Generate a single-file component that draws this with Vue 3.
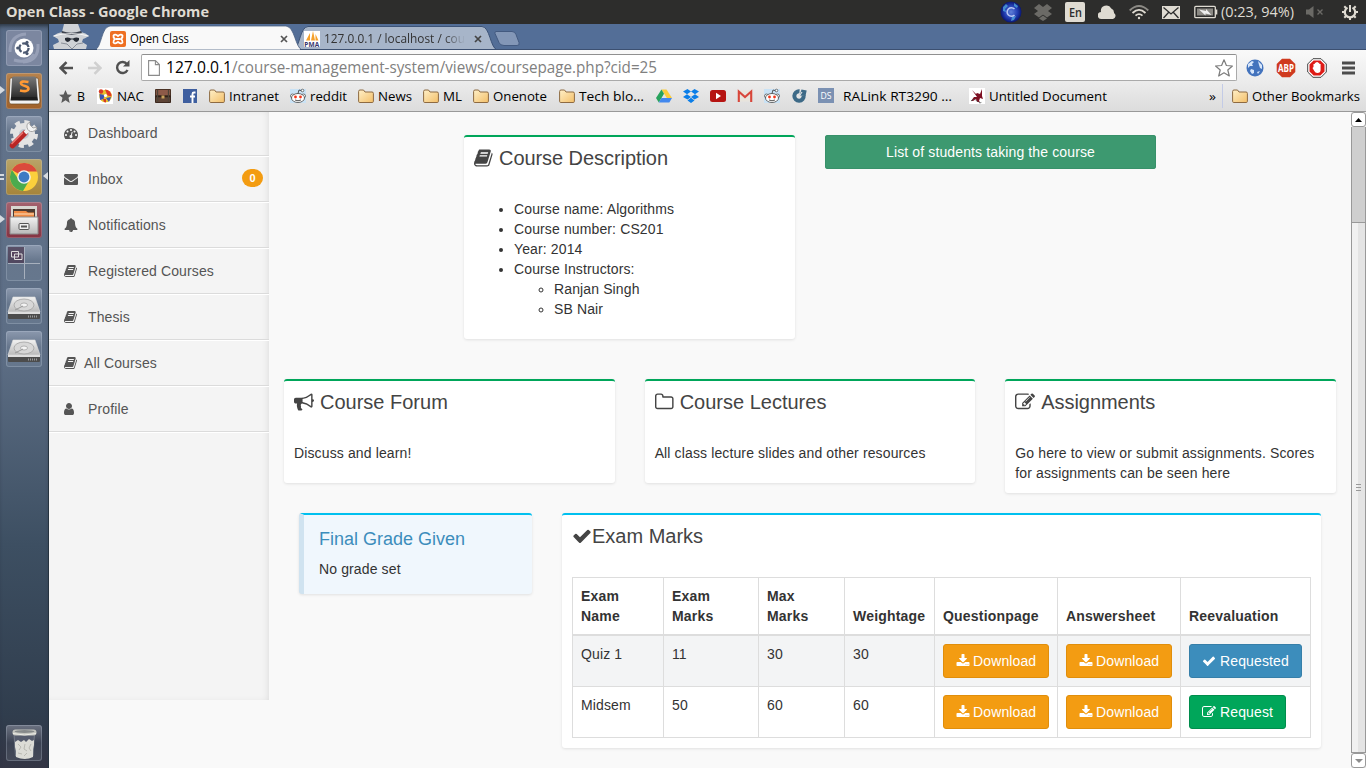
<script setup>
import { h } from 'vue'

// One line of text set to an exact width
const Fit = (props) =>
  h('svg', { width: props.w, height: props.ht || 18, class: 'fit' }, [
    h('text', { x: 0, y: props.base || 13.5, textLength: props.w, lengthAdjust: 'spacingAndGlyphs', fill: 'currentColor' }, props.t),
  ])
Fit.props = ['t', 'w', 'ht', 'base']

const paths = {
  dash: 'M384 1152q0-53-37.5-90.5t-90.5-37.5-90.5 37.5-37.5 90.5 37.5 90.5 90.5 37.5 90.5-37.5 37.5-90.5zm192-448q0-53-37.5-90.5t-90.5-37.5-90.5 37.5-37.5 90.5 37.5 90.5 90.5 37.5 90.5-37.5 37.5-90.5zm428 481l101-382q6-26-7.5-48.5t-38.5-29.5-48 6.5-30 39.5l-101 382q-60 5-107 43.5t-63 98.5q-20 77 20 146t117 89 146-20 89-117q16-60-6-117t-72-91zm660-33q0-53-37.5-90.5t-90.5-37.5-90.5 37.5-37.5 90.5 37.5 90.5 90.5 37.5 90.5-37.5 37.5-90.5zm-640-640q0-53-37.5-90.5t-90.5-37.5-90.5 37.5-37.5 90.5 37.5 90.5 90.5 37.5 90.5-37.5 37.5-90.5zm448 192q0-53-37.5-90.5t-90.5-37.5-90.5 37.5-37.5 90.5 37.5 90.5 90.5 37.5 90.5-37.5 37.5-90.5zm320 448q0 261-141 483-19 29-54 29h-1402q-35 0-54-29-141-221-141-483 0-182 71-348t191-286 286-191 348-71 348 71 286 191 191 286 71 348z',
  mail: 'M1792 710v794q0 66-47 113t-113 47h-1472q-66 0-113-47t-47-113v-794q44 49 101 87 362 246 497 345 57 42 92.5 65.5t94.5 48 110 24.5h2q51 0 110-24.5t94.5-48 92.5-65.5q170-123 498-345 57-39 100-87zm0-294q0 79-49 151t-122 123q-376 261-468 325-10 7-42.5 30.5t-54 38-52 32.5-57.5 27-50 9h-2q-23 0-50-9t-57.5-27-52-32.5-54-38-42.5-30.5q-91-64-262-182.5t-205-142.5q-62-42-117-115.5t-55-136.5q0-78 41.5-130t118.5-52h1472q65 0 112.5 47t47.5 113z',
  bell: 'M912 1696q0-16-16-16-59 0-101.5-42.5t-42.5-101.5q0-16-16-16t-16 16q0 73 51.5 124.5t124.5 51.5q16 0 16-16zm816-288q0 52-38 90t-90 38h-448q0 106-75 181t-181 75-181-75-75-181h-448q-52 0-90-38t-38-90q50-42 91-88t85-119.5 74.5-158.5 50-206 19.5-260q0-152 117-282.5t307-158.5q-8-19-8-39 0-40 28-68t68-28 68 28 28 68q0 20-8 39 190 28 307 158.5t117 282.5q0 139 19.5 260t50 206 74.5 158.5 85 119.5 91 88z',
  book: 'M1639 478q40 57 18 129l-275 906q-19 64-76.5 107.5t-122.5 43.5h-923q-77 0-148.5-53.5t-99.5-131.5q-24-67-2-127 0-4 3-27t4-37q1-8-3-21.5t-3-19.5q2-11 8-21t16.5-23.5 16.5-23.5q23-38 45-91.5t30-91.5q3-10 .5-30t-.5-28q3-11 17-28t17-23q21-36 42-92t25-90q1-9-2.5-32t.5-28q4-13 22-30.5t22-22.5q19-26 42.5-84.5t27.5-96.5q1-8-3-25.5t-2-26.5q2-8 9-18t18-23 17-21q8-12 16.5-30.5t15-35 16-36 19.5-32 26.5-23.5 36-11.5 47.5 5.5l-1 3q38-9 51-9h761q74 0 114 56t18 130l-274 906q-36 119-71.5 153.5t-128.5 34.5h-869q-27 0-38 15-11 16-1 43 24 70 144 70h923q29 0 56-15.5t35-41.5l300-987q7-22 5-57 38 15 59 43zm-1064 2q-4 13 2 22.5t20 9.5h608q13 0 25.5-9.5t16.5-22.5l21-64q4-13-2-22.5t-20-9.5h-608q-13 0-25.5 9.5t-16.5 22.5zm-83 256q-4 13 2 22.5t20 9.5h608q13 0 25.5-9.5t16.5-22.5l21-64q4-13-2-22.5t-20-9.5h-608q-13 0-25.5 9.5t-16.5 22.5z',
  user: 'M1280 1399q0 109-62.5 187t-150.5 78h-854q-88 0-150.5-78t-62.5-187q0-85 8.5-160.5t31.5-152 58.5-131 94-89 134.5-34.5q131 128 313 128t313-128q76 0 134.500 34.500t94 89 58.500 131 31.500 152 8.500 160.500zm-256-887q0 159-112.500 271.500t-271.500 112.500-271.500-112.500-112.500-271.500 112.500-271.500 271.500-112.500 271.500 112.500 112.500 271.500z',
  horn: 'M1664 640q53 0 90.5 37.5t37.5 90.5-37.5 90.5-90.5 37.5v384q0 52-38 90t-90 38q-417-347-812-380-58 19-91 66t-31 100.5 40 92.5q-20 33-23 65.5t6 58 33.5 55 48 50 61.5 50.5q-29 58-111.5 83t-168.5 11.5-132-55.5q-7-23-29.5-87.5t-32-94.5-23-89-15-101 3.5-98.5 22-110.5h-122q-66 0-113-47t-47-113v-192q0-66 47-113t113-47h480q435 0 896-384 52 0 90 38t38 90v384zm-128 604v-954q-394 302-768 343v270q377 42 768 341z',
  folder: 'M1536 1312v-704q0-40-28-68t-68-28h-704q-40 0-68-28t-28-68v-64q0-40-28-68t-68-28h-320q-40 0-68 28t-28 68v960q0 40 28 68t68 28h1216q40 0 68-28t28-68zm128-704v704q0 92-66 158t-158 66h-1216q-92 0-158-66t-66-158v-960q0-92 66-158t158-66h320q92 0 158 66t66 158v32h672q92 0 158 66t66 158z',
  edit: 'M888 1184l116-116-152-152-116 116v56h96v96h56zm440-720q-16-16-33 1l-350 350q-17 17-1 33t33-1l350-350q17-17 1-33zm80 594v190q0 119-84.5 203.5t-203.5 84.5h-832q-119 0-203.5-84.5t-84.5-203.5v-832q0-119 84.5-203.5t203.5-84.5h832q63 0 117 25 15 7 18 23 3 17-9 29l-49 49q-14 14-32 8-23-6-45-6h-832q-66 0-113 47t-47 113v832q0 66 47 113t113 47h832q66 0 113-47t47-113v-126q0-13 9-22l64-64q15-15 35-7t20 29zm-96-738l288 288-672 672h-288v-288zm444 132l-92 92-288-288 92-92q28-28 68-28t68 28l152 152q28 28 28 68t-28 68z',
  check: 'M1671 566q0 40-28 68l-724 724-136 136q-28 28-68 28t-68-28l-136-136-362-362q-28-28-28-68t28-68l136-136q28-28 68-28t68 28l294 295 656-657q28-28 68-28t68 28l136 136q28 28 28 68z',
  down: 'M1344 1344q0-26-19-45t-45-19-45 19-19 45 19 45 45 19 45-19 19-45zm256 0q0-26-19-45t-45-19-45 19-19 45 19 45 45 19 45-19 19-45zm128-224v320q0 40-28 68t-68 28h-1472q-40 0-68-28t-28-68v-320q0-40 28-68t68-28h465l135 136q58 56 136 56t136-56l136-136h464q40 0 68 28t28 68zm-325-569q17 41-14 70l-448 448q-18 19-45 19t-45-19l-448-448q-31-29-14-70 17-39 59-39h256v-448q0-26 19-45t45-19h256q26 0 45 19t19 45v448h256q42 0 59 39z',
}
const Fa = (props) =>
  h('svg', { viewBox: '0 0 1792 1792', width: props.s || 14, height: props.s || 14, class: 'fa' }, [
    h('path', { d: paths[props.n], fill: 'currentColor' }),
  ])
Fa.props = ['n', 's']

const menu = [
  { i: 'dash', t: 'Dashboard' },
  { i: 'mail', t: 'Inbox', badge: '0' },
  { i: 'bell', t: 'Notifications' },
  { i: 'book', t: 'Registered Courses' },
  { i: 'book', t: 'Thesis' },
  { i: 'book', t: 'All Courses', tight: true },
  { i: 'user', t: 'Profile' },
]

// slot: full width of the entry; tw: width of its label
const marks = [
  { k: 'star', t: 'B', slot: 38, tw: 8, iw: 18 },
  { k: 'nac', t: 'NAC', slot: 58, tw: 27, iw: 20 },
  { k: 'chest', slot: 27 },
  { k: 'fb', slot: 27 },
  { k: 'folder', t: 'Intranet', slot: 81, tw: 50, iw: 20 },
  { k: 'reddit', t: 'reddit', slot: 68, tw: 37, iw: 20 },
  { k: 'folder', t: 'News', slot: 65, tw: 34, iw: 20 },
  { k: 'folder', t: 'ML', slot: 50, tw: 19, iw: 20 },
  { k: 'folder', t: 'Onenote', slot: 86, tw: 54, iw: 20 },
  { k: 'folder', t: 'Tech blo…', slot: 97, tw: 65, iw: 20 },
  { k: 'drive', slot: 27 },
  { k: 'dropbox', slot: 27 },
  { k: 'tube', slot: 27 },
  { k: 'gmail', slot: 27 },
  { k: 'reddit', slot: 27 },
  { k: 'cc', slot: 27 },
  { k: 'ds', t: 'RALink RT3290 …', slot: 151, tw: 109, iw: 25 },
  { k: 'doc', t: 'Untitled Document', slot: 240, tw: 118, iw: 20 },
]

const exams = [
  { n: 'Quiz 1', m: 11, x: 30, w: 30, done: true },
  { n: 'Midsem', m: 50, x: 60, w: 60, done: false },
]
const launchers = ['ubuntu', 'sublime', 'settings', 'chrome', 'files', 'workspaces', 'disk', 'disk']
</script>

<template>
  <div class="desktop">
    <svg class="defs" width="0" height="0">
      <defs>
        <linearGradient id="gFold" x1="0" y1="0" x2="1" y2="1"><stop offset="0" stop-color="#fff0c8" /><stop offset="1" stop-color="#f3bf69" /></linearGradient>
        <linearGradient id="gDisk" x1="0" y1="0" x2="0" y2="1"><stop offset="0" stop-color="#f2f2f2" /><stop offset="1" stop-color="#b9b9b9" /></linearGradient>
        <linearGradient id="gKey" x1="0" y1="0" x2="0" y2="1"><stop offset="0" stop-color="#7a7a7a" /><stop offset="1" stop-color="#2e2e2e" /></linearGradient>
        <radialGradient id="gGlobe"><stop offset="0" stop-color="#5f7fd8" /><stop offset=".6" stop-color="#2440b4" /><stop offset="1" stop-color="#0a1670" /></radialGradient>
      </defs>
    </svg>

    <header class="panel">
      <Fit class="title" t="Open Class - Google Chrome" :w="203" :ht="22" :base="16" />
      <div class="tray">
        <svg width="22" height="24" viewBox="0 0 22 24"><circle cx="11" cy="12" r="10.500" fill="url(#gGlobe)" /><path d="M3 7l3-3 2 2-3 3 1 3-3-1zM14 3l4 3-1 2-3-2zM12 17l4-1-2 4-3 1z" fill="#56b4e4" opacity=".7" /><path d="M14.500 9a4.300 4.300 0 1 0 0 6" fill="none" stroke="#b9c8f4" stroke-width="1.500" /></svg>
        <svg class="m12" width="18" height="18" viewBox="0 0 18 18" fill="#6b6a66"><path d="M5 1l4 3-5 4-4-3zM13 1l5 4-4 3-5-4zM4 8l5 3.500-4 3-5-3.500zM14 8l4 3-5 3.500-4-3zM9 12.500l4 3-4 2.500-4-2.500zM9 4l5 4-5 4-5-4z" /></svg>
        <span class="en m13"><Fit t="En" :w="13" :ht="18" :base="14" /></span>
        <svg class="m13" width="18" height="16" viewBox="0 0 18 16"><path d="M3.500 15A3.500 3.500 0 0 1 3 8 5.500 5.500 0 0 1 13.300 4.500 4.500 4.500 0 0 1 16 9a3.300 3.300 0 0 1-1 6z" fill="#dfdbd2" /></svg>
        <svg class="m13" width="20" height="16" viewBox="0 0 20 16" fill="none" stroke="#dfdbd2" stroke-width="1.800"><path d="M.7 6.500Q10-2.500 19.300 6.500" stroke="#8c8a85" /><path d="M3.500 9Q10 2.800 16.500 9" /><path d="M6.500 11.700Q10 8.500 13.500 11.700" /><circle cx="10" cy="14" r="1.200" fill="#dfdbd2" stroke="none" /></svg>
        <svg class="m13" width="18" height="13" viewBox="0 0 18 13"><path d="M0 0h18v13H0z" fill="#dfdbd2" /><path d="M1.500 1.500L9 8l7.500-6.500M1.500 12L6.500 6.500M16.500 12L11.500 6.500" fill="none" stroke="#2c2c2c" stroke-width="1.300" /></svg>
        <svg class="m14" width="24" height="14" viewBox="0 0 24 14"><rect x=".8" y="1.300" width="20.500" height="11.400" rx="1" fill="none" stroke="#dfdbd2" stroke-width="1.300" /><path d="M22.500 4.500v5" stroke="#dfdbd2" stroke-width="1.600" /><path d="M3 3.500h16v7H3z" fill="#8b8984" /><path d="M5 4.500l7 1.500V4l5.500 6-6-1.500v2z" fill="#eee" /></svg>
        <Fit class="m4" t="(0:23, 94%)" :w="73" :ht="22" :base="16" />
        <svg class="m12" width="18" height="14" viewBox="0 0 18 14"><path d="M0 4.500h3L7.500 1v12L3 9.500H0z" fill="#6b6a66" /><path d="M11.500 4.500l5 5m0-5l-5 5" stroke="#6b6a66" stroke-width="1.400" /></svg>
        <svg class="m17" width="18" height="18" viewBox="0 0 18 18" fill="none" stroke="#dfdbd2"><path d="M6.500 4.600A5.200 5.200 0 1 0 11.500 4.600" stroke-width="2.200" /><path d="M9 2v7" stroke-width="2" /><path d="M1 9h2.500M14.500 9H17M3.300 14.700L5 13M13 13l1.700 1.700M3.300 3.300L5 5M13 5l1.700-1.700M9 14.500V17" stroke-width="2" /></svg>
      </div>
    </header>

    <div class="work">
      <nav class="launcher">
        <div v-for="(l, i) in launchers" :key="i" class="tile" :class="l">
          <svg viewBox="0 0 36 36" width="36" height="36">
            <g v-if="l === 'ubuntu'"><path d="M4 22Q4 5 20 4M32 14Q33 31 17 32M8 30Q22 34 28 24" fill="none" stroke="#b7bfd3" stroke-width="3" opacity=".45" /><circle cx="18" cy="18" r="9.500" fill="#fff" /><circle cx="18" cy="18" r="4.600" fill="none" stroke="#4b5870" stroke-width="2.300" stroke-dasharray="8 1.630" /><circle cx="11.700" cy="18" r="1.600" fill="#4b5870" /><circle cx="21" cy="12.400" r="1.600" fill="#4b5870" /><circle cx="21" cy="23.600" r="1.600" fill="#4b5870" /></g>
            <g v-else-if="l === 'sublime'"><path d="M5 5h26q1 0 1.200 1L34 28q0 3-2 3H5q-2 0-2-3L4 6q0-1 1-1z" fill="#f2f2f2" stroke="#6b4a22" stroke-width=".7" /><path d="M7.500 3.500h21q1.500 0 1.700 1.500l1.300 19H5L6 5q0-1.500 1.500-1.500z" fill="url(#gKey)" /><path d="M5 24h26.500l.5 3.500H4.500z" fill="#1e1e1e" /><path d="M22.500 9Q14.500 7.500 15 10.500q.5 1.700 4 2.500t3.500 3q-.5 3.300-8.500 1.500" fill="none" stroke="#ff9934" stroke-width="2.600" /></g>
            <g v-else-if="l === 'settings'"><circle cx="18" cy="18" r="11" fill="#e3e3e3" /><circle cx="18" cy="18" r="12" fill="none" stroke="#e3e3e3" stroke-width="4" stroke-dasharray="5 4.420" /><circle cx="18" cy="18" r="5" fill="#c1c7d0" /><path d="M6.500 29.500L19 17" stroke="#b92525" stroke-width="5.500" stroke-linecap="round" /><path d="M5.500 28L17 16.500" stroke="#ec7770" stroke-width="1.500" /><path d="M19 17l6-6" stroke="#eee" stroke-width="4" /><path d="M24 6a5 5 0 1 0 7 5l-4 1-3-3z" fill="#f3f3f3" stroke="#888" stroke-width=".7" /></g>
            <g v-else-if="l === 'chrome'"><circle cx="18" cy="18" r="14" fill="#fbd03c" /><path d="M18 18L5.900 11A14 14 0 0 1 31 12.500H18z" fill="#da4a3c" /><path d="M5.900 11A14 14 0 0 0 17 32l6.500-11H13z" fill="#4aab4e" /><circle cx="18" cy="18" r="6.800" fill="#f4f4f4" /><circle cx="18" cy="18" r="5.400" fill="#3d7bc4" /></g>
            <g v-else-if="l === 'files'"><path d="M5 4h26v12H5z" fill="#d9d6d0" /><path d="M7 7h22v8H7z" fill="#4d3b32" /><path d="M8 9h12l2 1.500h6V15H8z" fill="#f08b45" /><path d="M8 12h20" stroke="#fbe0c0" /><path d="M4 15h28v17H4z" fill="url(#gDisk)" stroke="#8b8b8b" /><rect x="13" y="21.500" width="10" height="6" rx="1" fill="#eee" stroke="#555" /><path d="M15 24.500h6" stroke="#555" stroke-width="2" /></g>
            <g v-else-if="l === 'workspaces'"><path d="M2 2h16v16H2z" fill="#4b3a52" opacity=".75" /><path d="M18.500 2v32M2 18.500h32" stroke="#a7b0bd" /><path d="M5.500 6.500h7v5.500h-7zM8.500 9h7.500v5.500H8.500z" fill="#57455e" stroke="#ddd" /></g>
            <g v-else><path d="M7 9h22l5 15H2z" fill="url(#gDisk)" stroke="#ddd" stroke-width=".6" /><ellipse cx="18" cy="17" rx="10" ry="6" fill="#d7d7d7" stroke="#a2a2a2" stroke-width=".8" /><ellipse cx="18" cy="17" rx="3.500" ry="2" fill="#f4f4f4" stroke="#999" stroke-width=".7" /><path d="M9 22l8-4" stroke="#999" /><path d="M2 24h32v6q0 1-1 1H3q-1 0-1-1z" fill="#4c4c4c" /><path d="M2 24h32v2H2z" fill="#dedede" /><path d="M22 28.500h9" stroke="#999" stroke-dasharray="1 1" stroke-width="2" /></g>
          </svg>
          <i v-if="l === 'sublime' || l === 'files'" class="run"></i>
          <i v-if="l === 'chrome'" class="bars"></i>
          <i v-if="l === 'chrome'" class="focus"></i>
        </div>
        <div class="tile trash">
          <svg viewBox="0 0 36 36" width="36" height="36">
            <path d="M8 9l1.500 22q8.500 3.500 17.500 0L28.500 9z" fill="#565c6d" stroke="#8d939c" stroke-width=".6" />
            <path d="M9 17l3-2 3 2 3-2 2 2 3-3 3 2 2-1 0 5-1 4 0 8q-8 4-17 0l0-6-1-4z" fill="#dcdcd6" />
            <path d="M12 19l3 3-2 3m6-6l-1 5 3 2m4-7l-2 4 2 3m-13 2l4 1m5-1l-3 3" fill="none" stroke="#b4b4ae" stroke-width=".9" />
            <rect x="6.500" y="4.500" width="24" height="6" rx="3" fill="#c4c5bf" /><ellipse cx="18.500" cy="6.500" rx="10" ry="1.500" fill="#85898a" /><path d="M7 8.500q11.500 3 23 0" stroke="#ecece6" fill="none" />
          </svg>
        </div>
      </nav>

      <div class="browser">
        <div class="tabstrip">
          <svg class="shapes" width="1317" height="26" viewBox="49 24 1317 26">
            <path d="M294 50C300 46 300 27 308 26.500H482C490 27 490 47 497 50z" fill="#a7b5c9" stroke="#3c5377" />
            <path d="M496 31.500h16q3 0 4 3l3 8q1 3-2 3h-13q-4 0-5-3l-4-9q-.500-2 1-2z" fill="#8397b7" stroke="#435a80" />
            <path d="M95 50C102 47 101 27 110 26H286C295 27 295 47 302 50z" fill="#f9f9f9" stroke="#4a5f82" stroke-width=".8" />
            <path d="M49 49.500h48M300 49.500h1066" stroke="#3c5071" />
            <path d="M64 24h14l3 8q5 1 8 4-5 3-6 3l-1 3 5 3-1 4H54l-1-4 6-3-1-3-5-3q4-3 9-4z" fill="#cfd2d6" />
            <path d="M62 31q9 3.500 19 0l1 2q-10 3.500-20.500 0z" fill="#3d434e" /><path d="M53.500 36q18-5 35 0" stroke="#fff" fill="none" stroke-width=".8" />
            <path d="M65 38q3-1 6 .5h2q3-1.500 6-.5v2q-3 4-6-.5h-2q-3 4.500-6 .5z" fill="#252a33" /><path d="M61 43l6 1 5 5 5-5 6-1" stroke="#8b9099" fill="none" />
          </svg>
          <div class="tab first">
            <svg width="16" height="16" viewBox="0 0 16 16"><rect width="16" height="16" rx="2" fill="#ee6f22" /><path d="M3.500 4.500q1.500-2 4.500.5 3-2.500 4.500-.5.5 2-1.500 3.500 2 1.500 1.500 3.500-1.500 2-4.500-.5-3 2.500-4.500.5-.5-2 1.500-3.500-2-1.500-1.500-3.500zM6 8h4" fill="none" stroke="#fff" stroke-width="1.800" /></svg>
            <Fit t="Open Class" :w="59" :base="12.500" />
            <svg class="x" width="8" height="8" viewBox="0 0 8 8"><path d="M1 1l6 6m0-6L1 7" stroke="#555" stroke-width="1.700" /></svg>
          </div>
          <div class="tab second">
            <svg width="16" height="16" viewBox="0 0 16 16"><path d="M0 0h16v16H0z" fill="#fff" /><path d="M2 9.500L6 2v7.500zM7 9.500L9 0l2 9.500zM11.500 3l3 6.500h-3z" fill="#f5a02a" /><text x=".3" y="15.500" font-size="6.500" font-weight="700" textLength="15" fill="#36366b">PMA</text></svg>
            <Fit class="fade" t="127.0.0.1 / localhost / cou" :w="141" :base="12.500" />
            <svg class="x" width="8" height="8" viewBox="0 0 8 8"><path d="M1 1l6 6m0-6L1 7" stroke="#444" stroke-width="1.700" /></svg>
          </div>
        </div>

        <div class="toolbar">
          <svg width="15" height="14" viewBox="0 0 15 14"><path d="M14 7H2M7.500 1.200L1.700 7l5.800 5.800" fill="none" stroke="#505050" stroke-width="2.600" /></svg>
          <svg class="fwd" width="15" height="14" viewBox="0 0 15 14"><path d="M1 7h12M7.500 1.200L13.300 7l-5.800 5.800" fill="none" stroke="#d0d0d0" stroke-width="2.600" /></svg>
          <svg class="reload" width="15" height="15" viewBox="0 0 15 15"><path d="M12 4.200A5.500 5.500 0 1 0 12.500 10" fill="none" stroke="#505050" stroke-width="2.400" /><path d="M14.500 0v6.500H8z" fill="#505050" /></svg>
          <div class="url">
            <svg width="12" height="16" viewBox="0 0 12 16"><path d="M.6.600h6.800l4 4v10.800H.6zM7.400.6v4h4" fill="#fff" stroke="#8b8b8b" stroke-width="1.100" /></svg>
            <Fit class="host" t="127.0.0.1" :w="66" :ht="24" :base="17" />
            <Fit class="path" t="/course-management-system/views/coursepage.php?cid=25" :w="425" :ht="24" :base="17" />
            <svg class="fav" width="18" height="18" viewBox="0 0 18 18"><path d="M9 .8l2.400 5.700 6 .5-4.600 4 1.500 6L9 13.800 3.700 17l1.500-6L.6 7l6-.5z" fill="#fff" stroke="#7c7c7c" stroke-width="1.200" stroke-linejoin="round" /></svg>
          </div>
          <svg class="e1" width="18" height="18" viewBox="0 0 18 18"><circle cx="9" cy="9" r="8.500" fill="#4373bd" /><path d="M2 5l4-3 2 1-2 2 1 2-3 0-2 2zM12 2l4 4 0 4-2-1-1-3zM5 10l3 1 0 3-2 1-2-3zM11 13l3-1-2 3z" fill="#d7e6fa" /></svg>
          <svg class="e2" width="20" height="20" viewBox="0 0 20 20"><path d="M6 .7h8L19.300 6v8L14 19.300H6L.7 14V6z" fill="#cf3a1f" /><text x="2" y="14" textLength="16" lengthAdjust="spacingAndGlyphs" font-size="11" font-weight="700" fill="#fff">ABP</text></svg>
          <svg class="e3" width="20" height="20" viewBox="0 0 20 20"><path d="M6 .7h8L19.300 6v8L14 19.300H6L.7 14V6z" fill="#fff" stroke="#444" /><path d="M6.600 2.500h6.800l4.100 4.100v6.800l-4.100 4.100H6.600l-4.100-4.100V6.600z" fill="#de1b16" /><path d="M6.500 9V6h1.300V4.700h1.500V4h1.500v.8h1.500V6h1.300v6q0 3-3.300 3-2 0-3-2L5.500 10z" fill="#fff" /></svg>
          <svg class="e4" width="14" height="14" viewBox="0 0 14 14"><path d="M0 2h13M0 7h13M0 12h13" stroke="#4c4c4c" stroke-width="2.800" /></svg>
        </div>

        <div class="bookmarks">
          <div v-for="(b, i) in marks" :key="i" class="bm" :style="{ width: b.slot + 'px' }">
            <span class="bi" :style="{ width: (b.iw || 16) + 'px' }">
              <svg v-if="b.k === 'star'" width="13" height="13" viewBox="0 0 13 13"><path d="M6.500 0l2 4.500 4.500.3-3.500 3L10.700 13 6.500 10.200 2.300 13l1.200-5.200L0 4.800l4.500-.3z" fill="#5a5a5a" /></svg>
              <svg v-else width="16" height="16" viewBox="0 0 16 16">
                <g v-if="b.k === 'folder'"><path d="M.6 13.400V3.500Q.6 2 2 2h3.500l1.500 2h7q1.400 0 1.400 1.400v8q0 1.100-1.200 1.100H1.800Q.6 14.500.6 13.400z" fill="url(#gFold)" stroke="#8d6a42" /></g>
                <g v-else-if="b.k === 'nac'"><path d="M0 0h16v16H0z" fill="#fff" /><circle cx="8.500" cy="8" r="6.300" fill="#e7c22d" /><path d="M8 1.500a6.500 6.500 0 0 1 6.500 7l-4-1z" fill="#e03a27" /><path d="M2.500 6l5 1-1 4-3.500 1z" fill="#3d55b1" /><path d="M9 10l5-1-2 5z" fill="#3d55b1" /><circle cx="4" cy="3.500" r="2.200" fill="#d73a27" /><path d="M6 11l3 0 0 3.500-2-.5z" fill="#d73a27" /><circle cx="8.500" cy="7.500" r="1.600" fill="#fff" /></g>
                <g v-else-if="b.k === 'chest'"><path d="M.5 1.500h15V8H.5z" fill="#8d5a48" stroke="#4a3225" /><path d="M.5 8h15v6.500H.5z" fill="#5e4436" stroke="#3c281e" /><path d="M.5 8.500h15" stroke="#2f221a" stroke-width="1.500" /><path d="M2.500 2v12M13.500 2v12" stroke="#4e4438" stroke-width="1.300" /><path d="M6.500 7.500h3v3h-3z" fill="#c9a25b" /></g>
                <g v-else-if="b.k === 'fb'"><path d="M1 1h14v14H1z" fill="#3f5f9f" /><path d="M13.500 4.500H12Q10.500 4.500 10.500 6v9M8 8.500h5" stroke="#fff" stroke-width="1.900" fill="none" /></g>
                <g v-else-if="b.k === 'reddit'"><path d="M0 1h16v14H0z" fill="#c9e2f5" /><circle cx="2.500" cy="8" r="2" fill="#fff" stroke="#555" stroke-width=".8" /><circle cx="13.500" cy="8" r="2" fill="#fff" stroke="#555" stroke-width=".8" /><ellipse cx="8" cy="10" rx="6.500" ry="4.500" fill="#fff" stroke="#444" stroke-width=".8" /><circle cx="5.500" cy="9" r="1.400" fill="#f4381b" /><circle cx="10.500" cy="9" r="1.400" fill="#f4381b" /><path d="M5 12q3 1.500 6 0M8 5.500L9 2l3 .8" stroke="#444" fill="none" stroke-width=".9" /><circle cx="12.500" cy="2.500" r="1.300" fill="#fff" stroke="#444" stroke-width=".7" /></g>
                <g v-else-if="b.k === 'drive'"><path d="M5.500 1.500h5L16 10h-5.200z" fill="#fbcc3c" /><path d="M5.500 1.500L8 5.700 2.800 14.500 0 10z" fill="#27a35c" /><path d="M5.400 10H16l-2.700 4.500H2.800z" fill="#4288ee" /></g>
                <g v-else-if="b.k === 'dropbox'" fill="#0b7ee8"><path d="M4.500 1L8 3.500 4 6.200 0 3.500zM11.500 1L16 3.500l-4 2.700-4-2.700zM0 9l4-2.800L8 9l-3.500 2.500zM16 9l-4-2.800L8 9l3.500 2.500zM8 9.800l3.500 2.700L8 15l-3.500-2.500z" /></g>
                <g v-else-if="b.k === 'tube'"><rect y="2" width="16" height="12" rx="2.500" fill="#b61412" /><path d="M6 4.800v6.400L11 8z" fill="#fff" /></g>
                <g v-else-if="b.k === 'gmail'"><path d="M1 2.500h14v11H1z" fill="#e8e4dc" /><path d="M1.800 14V3.500L8 9l6.200-5.500V14" fill="none" stroke="#d8463a" stroke-width="2.100" /></g>
                <g v-else-if="b.k === 'cc'"><path d="M8.500 3.300A4.700 4.700 0 1 0 12.700 7.500" fill="none" stroke="#3d6a87" stroke-width="4" /><path d="M8.500 7.500L10.500 1.500 15.700 2.500 14.500 8z" fill="#3d6a87" /><path d="M8 8.500L11 4" stroke="#e2e2e2" stroke-width="1.200" /></g>
                <g v-else-if="b.k === 'ds'"><path d="M0 0h16v15H0z" fill="#7b91b3" /><text x="2.500" y="11" textLength="11" lengthAdjust="spacingAndGlyphs" font-size="9" fill="#fff">DS</text></g>
                <g v-else><path d="M0 0h16v16H0z" fill="#fff" /><path d="M3 2l4 4 1-1 3 1 2-5v7l1 3-3-1-1 3 1 1H8l-1-3-3 2H2l3-4h3z" fill="#7d0f22" /><path d="M2 13q3-3 6 0t5 1" stroke="#555" fill="none" stroke-dasharray="2 1" /></g>
              </svg>
            </span>
            <Fit v-if="b.t" :t="b.t" :w="b.tw" />
          </div>
          <Fit class="more" t="»" :w="7" />
          <span class="split"></span>
          <div class="bm">
            <span class="bi wide"><svg width="16" height="16" viewBox="0 0 16 16"><path d="M.6 13.400V3.500Q.6 2 2 2h3.500l1.500 2h7q1.400 0 1.400 1.400v8q0 1.100-1.200 1.100H1.800Q.6 14.500.6 13.400z" fill="url(#gFold)" stroke="#8d6a42" /></svg></span>
            <Fit t="Other Bookmarks" :w="108" />
          </div>
        </div>

        <div class="page">
          <aside class="sidebar">
            <a v-for="m in menu" :key="m.t" class="item">
              <span class="ico" :class="{ tight: m.tight }"><Fa :n="m.i" /></span>{{ m.t }}
              <span v-if="m.badge" class="badge">{{ m.badge }}</span>
            </a>
            <div class="rest"></div>
          </aside>

          <main class="content">
            <div class="row intro">
              <section class="col">
                <div class="card tall">
                  <h3 class="snug"><Fa n="book" :s="20" />Course Description</h3>
                  <ul>
                    <li>Course name: Algorithms</li>
                    <li>Course number: CS201</li>
                    <li>Year: 2014</li>
                    <li>Course Instructors:
                      <ul><li>Ranjan Singh</li><li>SB Nair</li></ul>
                    </li>
                  </ul>
                </div>
              </section>
              <section class="col"><a class="students">List of students taking the course</a></section>
            </div>
            <div class="row trio">
              <section class="col"><div class="card"><h3><Fa class="wide" n="horn" :s="20" />Course Forum</h3><p class="one">Discuss and learn!</p></div></section>
              <section class="col"><div class="card"><h3><Fa n="folder" :s="20" />Course Lectures</h3><p class="one">All class lecture slides and other resources</p></div></section>
              <section class="col"><div class="card"><h3 class="snug"><Fa class="wide" n="edit" :s="20" />Assignments</h3><p>Go here to view or submit assignments. Scores for assignments can be seen here</p></div></section>
            </div>
            <div class="row results">
              <div class="card grade"><h4>Final Grade Given</h4><p>No grade set</p></div>
              <div class="card exam">
                <h3><Fa class="none" n="check" :s="20" />Exam Marks</h3>
                <table>
                  <colgroup><col class="c1" /><col class="c2" /><col class="c3" /><col class="c4" /><col class="c5" /><col class="c5" /><col class="c7" /></colgroup>
                  <thead><tr><th>Exam<br />Name</th><th>Exam<br />Marks</th><th>Max<br />Marks</th><th>Weightage</th><th>Questionpage</th><th>Answersheet</th><th>Reevaluation</th></tr></thead>
                  <tbody>
                    <tr v-for="e in exams" :key="e.n">
                      <td>{{ e.n }}</td><td>{{ e.m }}</td><td>{{ e.x }}</td><td>{{ e.w }}</td>
                      <td><a class="btn warn"><Fa n="down" />Download</a></td>
                      <td><a class="btn warn"><Fa n="down" />Download</a></td>
                      <td><a v-if="e.done" class="btn info"><Fa n="check" />Requested</a><a v-else class="btn ok"><Fa n="edit" />Request</a></td>
                    </tr>
                  </tbody>
                </table>
              </div>
            </div>
          </main>

          <div class="scroll">
            <span class="arrow"><svg width="7" height="4" viewBox="0 0 7 4"><path d="M3.500 0L7 4H0z" fill="#000" /></svg></span>
            <span class="track"></span>
            <span class="thumb"><i></i><i></i><i></i></span>
            <span class="arrow"><svg width="8" height="4" viewBox="0 0 8 4"><path d="M0 0h8L4 4z" fill="#8c8c8c" /></svg></span>
          </div>
        </div>
      </div>
    </div>
  </div>
</template>

<style>
html, body { margin: 0; overflow: hidden; }
</style>

<style scoped>
* { box-sizing: border-box; }
.desktop { width: 1366px; height: 768px; overflow: hidden; font: 13px "Open Sans", "Noto Sans", sans-serif; color: #000; display: flex; flex-direction: column; }
.defs { position: absolute; }
svg { display: block; flex: none; }
.fit { overflow: visible; }
.panel { height: 24px; flex: none; background: #2d2d2c; color: #dfdbd2; display: flex; align-items: center; justify-content: space-between; padding: 0 7px 0 6px; font-size: 14px; }
.title { font-weight: 700; }
.tray { display: flex; align-items: center; }
.m4 { margin-left: 3px; } .m12 { margin-left: 12px; } .m13 { margin-left: 13px; } .m14 { margin-left: 14px; } .m17 { margin-left: 17px; }
.en { width: 20px; height: 20px; background: #dfdbd2; color: #2c2c2c; border-radius: 2px; padding: 1px 0 0 4px; font-size: 13px; font-weight: 600; }
.work { flex: 1; display: flex; min-height: 0; }
.launcher { width: 49px; flex: none; display: flex; flex-direction: column; padding: 6px 0 7px 6px; gap: 7px; background: linear-gradient(#566984 0, #62738b 10%, #5c6d84 45%, #3d4f62 70%, #303d4d 93%, #333544 100%); border-right: 1px solid #26333f; box-shadow: inset 0 4px 4px -2px #2a3440; }
.tile { width: 36px; height: 36px; flex: none; position: relative; border-radius: 3px; background: linear-gradient(#8b98ad, #66768c 45%, #66778d); box-shadow: inset 0 0 0 1px rgba(205, 215, 230, .25); }
.ubuntu { background: #7c87a0; }
.sublime { background: linear-gradient(#b8834c, #a0612a); }
.chrome { background: linear-gradient(#b9a468, #a5843a); }
.files { background: linear-gradient(#a4626e, #853342); }
.trash { margin-top: auto; background: linear-gradient(#6c7281, #3b4252 50%, #454a58); }
.run { position: absolute; left: -6px; top: 13px; border: 4.5px solid transparent; border-left: 5px solid #d6dbe1; border-right: 0; }
.bars { position: absolute; left: -6px; top: 15px; width: 4px; height: 6px; border: solid #d6dbe1; border-width: 2px 0; }
.focus { position: absolute; right: -6px; top: 13px; border: 4.5px solid transparent; border-right: 5px solid #d6dbe1; border-left: 0; }
.browser { flex: 1; min-width: 0; display: flex; flex-direction: column; }
.tabstrip { height: 26px; flex: none; position: relative; background: #536e97; font-size: 12px; }
.shapes { position: absolute; left: 0; top: 0; }
.tab { position: absolute; top: 7px; display: flex; align-items: center; height: 16px; }
.tab .fit { margin-left: 4px; }
.tab .x { margin-left: auto; }
.first { left: 61px; width: 178px; }
.second { left: 255px; width: 178px; color: #333; }
.fade { -webkit-mask-image: linear-gradient(90deg, #000 85%, transparent); mask-image: linear-gradient(90deg, #000 85%, transparent); }
.toolbar { height: 33px; flex: none; display: flex; align-items: center; padding: 2px 0 0 10px; background: linear-gradient(#f9f9f9, #ebebeb); }
.fwd { margin-left: 13px; } .reload { margin-left: 13px; }
.url { margin-left: 11px; width: 1096px; height: 27px; border: 1px solid #aaa; border-top-color: #8f8f8f; border-radius: 2px; background: #fff; display: flex; align-items: center; padding: 0 3px 0 6px; font-size: 16px; }
.host { margin-left: 6px; } .path { color: #808080; } .fav { margin-left: auto; }
.e1 { margin-left: 9px; } .e2 { margin-left: 12px; } .e3 { margin-left: 11px; } .e4 { margin-left: 15px; }
.bookmarks { height: 29px; flex: none; display: flex; align-items: center; padding: 0 0 2px 10px; background: linear-gradient(#ebebeb, #dcdcdc); border-bottom: 1px solid #999; }
.bm { display: flex; align-items: center; flex: none; }
.bi { flex: none; width: 16px; } .bi.wide { width: 20px; }
.more { margin-left: 0; } .split { width: 1px; height: 24px; margin: 0 9px 0 6px; background: #c3cbe6; }
.page { flex: 1; min-height: 0; display: flex; overflow: hidden; background: #f9f9f9; font: 14px/20px "Liberation Sans", Arial, sans-serif; color: #333; letter-spacing: .125px; }
.sidebar { width: 220px; height: 588px; flex: none; overflow: hidden; background: #f4f4f4; box-shadow: inset -3px 0 8px -4px rgba(0, 0, 0, .14); }
.item { display: flex; align-items: center; height: 46px; padding: 0 6px 0 15px; color: #555; border-top: 1px solid #fff; border-bottom: 1px solid #dbdbdb; }
.item:first-child { margin-top: -2px; }
.rest { border-top: 1px solid #fff; }
.ico { width: 24px; } .ico.tight { width: 20px; }
.badge { margin-left: auto; width: 21px; height: 18px; border-radius: 9px; background: #f39c12; color: #fff; font: 700 11px/18px "Liberation Sans", sans-serif; text-align: center; margin-top: -2px; }
.content { width: 1082px; flex: none; padding-top: 23px; }
.row { display: flex; align-items: flex-start; }
.col { width: 33.3333%; padding: 0 15px; }
.intro { padding-left: 180px; height: 244px; }
.intro .col { width: 361px; }
.trio { height: 134px; }
.card { background: #fff; border-top: 2px solid #00a65a; border-radius: 3px; box-shadow: 0 1px 3px rgba(0, 0, 0, .1); padding: 10px; }
.card.tall { height: 204px; }
h3 { display: flex; align-items: center; margin: 0 0 30px; font-size: 20px; line-height: 22px; font-weight: 400; color: #444; letter-spacing: 0; }
h3.snug { letter-spacing: -.06px; }
h3 .fa { margin-right: 5px; } h3 .wide { margin-right: 6px; } h3 .none { margin-right: 0; }
ul { margin: 0; padding-left: 40px; }
p { margin: 0; } .one { padding-bottom: 10px; }
.students { display: block; height: 34px; line-height: 34px; border-radius: 3px; background: #3d9970; color: #fff; text-align: center; box-shadow: inset 0 0 0 1px #38916a; }
.results { padding: 0 30px; gap: 30px; }
.grade { width: 233px; height: 81px; border-top-color: #00c0ef; background: #f0f7fd; border-left: 5px solid #d0e3f0; padding: 14px 0 0 15px; }
h4 { margin: 0 0 10px; font-size: 18px; line-height: 20px; font-weight: 400; color: #3c8dbc; letter-spacing: 0; }
.exam { width: 759px; border-top-color: #00c0ef; }
table { width: 738px; table-layout: fixed; border-collapse: collapse; }
th, td { border: 1px solid #ddd; padding: 8px; text-align: left; vertical-align: top; line-height: 20px; }
th { vertical-align: bottom; border-bottom-width: 2px; white-space: nowrap; letter-spacing: .2px; }
td { height: 51px; }
tbody tr:first-child { background: #f3f4f5; }
.c1 { width: 91px; } .c2 { width: 95px; } .c3 { width: 86px; } .c4 { width: 90px; } .c5 { width: 123px; } .c7 { width: 130px; }
.btn { display: inline-flex; vertical-align: top; align-items: center; height: 34px; border-radius: 3px; color: #fff; border: 1px solid; padding: 0 12px; }
.btn .fa { margin-right: 4px; }
.warn { background: #f39c12; border-color: #e08e0b; width: 106px; }
.warn .fa { margin-right: 3px; }
.info { background: #3c8dbc; border-color: #367fa9; width: 113px; }
.ok { background: #00a65a; border-color: #008d4c; width: 97px; }
.scroll { width: 15px; flex: none; display: flex; flex-direction: column; background: #eee; }
.arrow { height: 15px; flex: none; border: 1px solid #999; border-radius: 3px; background: #fff; display: flex; align-items: center; justify-content: center; }
.track { height: 95px; flex: none; background: #cfcfcf; border: solid #999; border-width: 0 1px; }
.thumb { flex: 1; border: 1px solid #999; background: linear-gradient(90deg, #f1f1f1 50%, #e4e4e4 50%); display: flex; flex-direction: column; align-items: center; justify-content: center; gap: 2px; }
.thumb i { width: 5px; height: 1px; background: #999; }
</style>
